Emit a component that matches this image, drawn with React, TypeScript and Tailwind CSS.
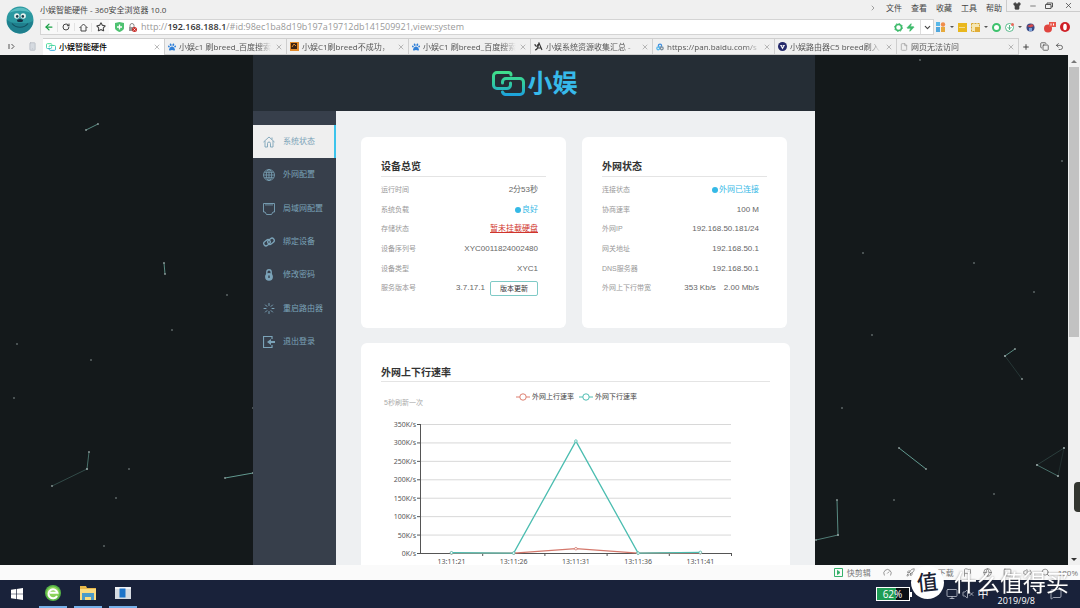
import type { ReactNode } from "react";
import {
  ArrowLeft,
  ChevronDown,
  ChevronRight,
  Copy,
  Download,
  File,
  Flag,
  Gauge,
  Globe,
  Loader,
  MessageSquare,
  Minus,
  Monitor,
  Plus,
  Rocket,
  RotateCw,
  Search,
  Shirt,
  Smartphone,
  Square,
  Star,
  Undo2,
  Volume2,
  VolumeX,
  X,
  Zap,
} from "lucide-react";
import { FaPaw } from "react-icons/fa";

function Avatar() {
  return (
    <svg viewBox="0 0 28 28" className="h-7 w-7">
      <circle cx="14" cy="14" r="13.5" fill="#2b98a0" />
      <path d="M1 14a13 13 0 0 0 26 1c-5 3-8 2-13 2S5 17 1 14z" fill="#1f7f8d" />
      <path d="M3 7c5-6 16-8 22 0-6-3-16-3-22 0z" fill="#5bbcc0" />
      <circle cx="10.8" cy="10" r="2.700" fill="#e6f2f0" />
      <circle cx="17.2" cy="10" r="2.700" fill="#e6f2f0" />
      <circle cx="11.2" cy="10.4" r="1.3" fill="#173d4a" />
      <circle cx="16.8" cy="10.4" r="1.3" fill="#173d4a" />
      <ellipse cx="14" cy="14.5" rx="3" ry="1.6" fill="#152f42" />
      <path d="M6 17.500c4 5 12 5 16 0" stroke="#12505f" strokeWidth="1.2" fill="none" />
    </svg>
  );
}

function LinkMark({ className }: { className: string }) {
  return (
    <svg viewBox="0 0 33 25" className={className} fill="none" strokeWidth="3" strokeLinecap="round">
      <defs>
        <linearGradient id="mark" x1="0" y1="0" x2="0" y2="25" gradientUnits="userSpaceOnUse">
          <stop offset="0" stopColor="#41e089" />
          <stop offset="0.55" stopColor="#2fc7a4" />
          <stop offset="1" stopColor="#1b9fe2" />
        </linearGradient>
      </defs>
      <path
        d="M19 4V4a2.500 2.500 0 0 0-2.500-2.500H5A3.500 3.500 0 0 0 1.500 5v9A3.500 3.500 0 0 0 5 17.500h10a3.500 3.500 0 0 0 3.500-3.500v-2"
        stroke="url(#mark)"
      />
      <path
        d="M10.500 12V11a3.500 3.500 0 0 1 3.500-3.500h14a3.500 3.500 0 0 1 3.500 3.500v9a3.500 3.500 0 0 1-3.500 3.500H14a3.500 3.500 0 0 1-3.500-2.500"
        stroke="url(#mark)"
      />
    </svg>
  );
}

const tabs: { title: string; icon: ReactNode; active?: boolean }[] = [
  { title: "小娱智能硬件", icon: <LinkMark className="h-2 w-[10px]" />, active: true },
  { title: "小娱c1 刷breed_百度搜索", icon: <FaPaw className="size-2 text-[#2f7fd8]" /> },
  {
    title: "小娱C1刷breed不成功，",
    icon: (
      <svg viewBox="0 0 9 9" className="size-[9px]">
        <path d="M0 0h9v9H0z" fill="#e08a2c" />
        <path d="M1 1h6v6H1z" fill="#3a2212" />
        <path d="M2 5l2-3 2 2" stroke="#e08a2c" fill="none" />
      </svg>
    ),
  },
  { title: "小娱C1 刷breed_百度搜索", icon: <FaPaw className="size-2 text-[#2f7fd8]" /> },
  {
    title: "小娱系统资源收集汇总 - ",
    icon: (
      <svg viewBox="0 0 9 9" className="size-[9px]" fill="none" stroke="#333" strokeWidth="1.1">
        <path d="M1 2c0 3 3 3 3 0M1 8c3 0 3-4 4-7l3 7M4 6h3" />
      </svg>
    ),
  },
  {
    title: "https://pan.baidu.com/s",
    icon: (
      <svg viewBox="0 0 9 9" className="size-2" fill="none" strokeWidth="1.4">
        <circle cx="4.500" cy="3" r="1.800" stroke="#3d8fe0" />
        <circle cx="2.500" cy="6" r="1.600" stroke="#54b5ea" />
        <circle cx="6.500" cy="6" r="1.600" stroke="#7b8c9a" />
      </svg>
    ),
  },
  {
    title: "小娱路由器C5 breed刷入",
    icon: (
      <svg viewBox="0 0 9 9" className="size-[9px]">
        <circle cx="4.500" cy="4.500" r="4.500" fill="#252a6b" />
        <path d="M2 3h5L4.500 7.500z" fill="#fff" />
        <circle cx="4.500" cy="4" r=".8" fill="#252a6b" />
      </svg>
    ),
  },
  { title: "网页无法访问", icon: <File className="size-2 text-[#999]" /> },
];

function Caret() {
  return <span className="border-x-2 border-t-2 border-x-transparent border-t-[#555]" />;
}

function BrowserBar() {
  return (
    <header className="shrink-0 bg-[#f0f0f0] text-[#444]">
      <div className="flex">
        <div className="flex w-10 shrink-0 items-center pl-[6px] pt-1">
          <Avatar />
        </div>
        <div className="min-w-0 flex-1">
          <div className="flex h-[19px] items-center text-[8px]">
            <span className="flex-1">小娱智能硬件 - 360安全浏览器 10.0</span>
            <nav className="flex h-full items-center gap-[9px] pb-1 pr-1">
              <ChevronRight className="size-2 text-[#777]" />
              {["文件", "查看", "收藏", "工具", "帮助"].map((m) => (
                <button key={m}>{m}</button>
              ))}
            </nav>
            <div className="flex h-3 items-center gap-2 self-start border-b border-l border-[#ccc] pl-[6px] pr-[7px]">
              <button aria-label="皮肤">
                <Shirt className="size-2" fill="#444" />
              </button>
              <button aria-label="最小化">
                <Minus className="size-2" />
              </button>
              <button aria-label="还原">
                <svg viewBox="0 0 8 8" className="size-2" fill="none" stroke="#555">
                  <path d="M.5 2.500h5.500v4H.500zM2 2.500v-1.500h5.500v4H6" />
                </svg>
              </button>
              <button aria-label="关闭" className="pl-[3px]">
                <X className="size-[9px]" />
              </button>
            </div>
          </div>
          <div className="flex h-4 items-center">
            <div className="flex h-4 min-w-0 flex-1 items-center border border-[#d4d4d4] bg-white">
              <div className="flex h-full items-center divide-x divide-[#e2e2e2] bg-[#f8f8f8]">
                <button aria-label="后退" className="flex w-[17px] justify-center">
                  <ArrowLeft className="size-[10px] text-[#18a045]" strokeWidth={3} />
                </button>
                <button aria-label="刷新" className="flex w-[17px] justify-center">
                  <RotateCw className="size-2" strokeWidth={3} />
                </button>
                <button aria-label="主页" className="flex w-[17px] justify-center">
                  <svg viewBox="0 0 9 9" className="size-[9px]" fill="none" stroke="#444">
                    <path d="M.5 5L4.500 1l4 4M2 4v4h5V4" />
                  </svg>
                </button>
                <button aria-label="收藏" className="flex w-[17px] justify-center">
                  <Star className="size-[10px]" strokeWidth={2.500} />
                </button>
              </div>
              <svg viewBox="0 0 9 10" className="ml-[6px] h-[10px] w-[9px]">
                <path d="M0 1L4.500 0 9 1v5c0 2-3 3.500-4.500 4C3 9.500 0 8 0 6z" fill="#4ec271" />
                <path d="M4.500 2.500v5M2 5h5" stroke="#fff" strokeWidth="1.300" />
              </svg>
              <svg viewBox="0 0 9 9" className="ml-1 size-[9px]">
                <path d="M2 4V2.500a2 2 0 0 1 4 0V4" stroke="#888" fill="none" />
                <path d="M1 4h6v4H1z" fill="#999" />
                <circle cx="6.500" cy="6.500" r="2.500" fill="#c9302c" />
                <path d="M5.500 5.500l2 2m0-2l-2 2" stroke="#fff" strokeWidth=".7" />
              </svg>
              <label htmlFor="address" className="ml-1 shrink-0 text-[9px] text-[#999]">
                http://<b className="font-semibold text-[#333]">192.168.188.1</b>
              </label>
              <input
                id="address"
                className="min-w-0 flex-1 text-[9px] text-[#999] outline-none"
                defaultValue="/#id:98ec1ba8d19b197a19712db141509921,view:system"
              />
              <svg viewBox="0 0 9 9" className="size-[9px]" fill="none" stroke="#3cba6a">
                <circle cx="4.500" cy="4.500" r="3" strokeWidth="1.500" />
                <circle cx="4.500" cy="4.500" r="4" strokeDasharray="1.500 1.600" />
              </svg>
              <Zap className="ml-[3px] mr-[5px] size-[9px] text-[#3cba6a]" fill="#3cba6a" />
              <button aria-label="展开" className="flex h-full w-[13px] items-center justify-center border-l border-[#ddd]">
                <ChevronDown className="size-[9px]" strokeWidth={3} />
              </button>
            </div>
            <div className="flex w-[146px] shrink-0 items-center pl-[2px] pr-[10px]">
              <svg viewBox="0 0 10 10" className="size-[10px]">
                <path d="M0 0h4v4H0z" fill="#58b8e8" />
                <circle cx="7" cy="2.500" r="2.200" fill="#f08c4a" />
                <path d="M0 5h4v5H0z" fill="#50a7dd" />
                <path d="M5 5h4v5H5z" fill="#e6a93c" />
              </svg>
              <span className="ml-1 flex">
                <Caret />
              </span>
              <svg viewBox="0 0 9 9" className="ml-1 size-[9px]">
                <path d="M0 0h9v9H0z" fill="#e9b71d" />
                <path d="M1.500 4.500h6" stroke="#fff" strokeDasharray="1 1" />
              </svg>
              <svg viewBox="0 0 9 9" className="ml-1 size-[9px]">
                <path d="M.5.500h8v8h-8z" fill="#f5e7b4" stroke="#d9a62c" strokeDasharray="2 1" />
                <path d="M4 4h5v5H4z" fill="#e2ad35" />
              </svg>
              <span className="ml-1 flex">
                <Caret />
              </span>
              <svg viewBox="0 0 9 9" className="ml-1 size-[9px]">
                <circle cx="4.500" cy="4.500" r="3.500" stroke="#3ec26d" strokeWidth="2" fill="#fff" />
              </svg>
              <svg viewBox="0 0 9 9" className="ml-1 size-[9px]">
                <circle cx="4.500" cy="4.500" r="4" stroke="#57b98a" fill="#fff" />
                <path d="M4.500 2v5M2.500 4l2 2 2-2" stroke="#57b98a" fill="none" />
                <circle cx="7.500" cy="1.500" r="1.500" fill="#e86a5c" />
              </svg>
              <span className="ml-1 flex">
                <Caret />
              </span>
              <svg viewBox="0 0 9 9" className="ml-1 size-[9px]">
                <circle cx="4.500" cy="4.500" r="4" fill="#3a4a86" />
                <path d="M1 3l3.500 1.500L8 3 6 1z" fill="#d4494a" />
                <path d="M3 5h3v3H3z" fill="#7aa1d8" />
              </svg>
              <svg viewBox="0 0 12 11" className="ml-auto h-[11px] w-3">
                <circle cx="4" cy="6.500" r="4" fill="#e0453f" />
                <path d="M5 0h7v5H5z" fill="#e9574b" />
                <path d="M7 1.500v2M9.500 1.500v2" stroke="#fff" />
              </svg>
              <svg viewBox="0 0 10 10" className="ml-1 size-[10px]">
                <circle cx="5" cy="5" r="5" fill="#cf1f26" />
                <ellipse cx="5" cy="5" rx="1.800" ry="3.200" fill="#fff" />
              </svg>
            </div>
          </div>
        </div>
      </div>
      <div className="flex h-5 items-end pt-[3px] text-[8px]">
        <div className="flex h-[17px] w-[43px] shrink-0 items-center justify-between pl-2 pr-[6px]">
          <svg viewBox="0 0 7 7" className="size-[7px]" fill="none" stroke="#555">
            <path d="M1 1v5M3.500 1L6 3.500 3.500 6" />
          </svg>
          <Smartphone className="size-[9px] text-[#b4bac2]" fill="#d5dae0" />
        </div>
        <div className="flex h-[17px] min-w-0 flex-1">
          {tabs.map((tab, i) => (
            <div
              key={i}
              className={`flex min-w-0 flex-1 items-center gap-[3px] border-r border-t border-[#cfcfcf] px-[3px] ${
                tab.active ? "bg-white text-black" : "border-b bg-[#f0f0f0] text-[#555]"
              }`}
            >
              <span className="shrink-0">{tab.icon}</span>
              <button
                className={`min-w-0 flex-1 overflow-hidden whitespace-nowrap text-left ${
                  tab.active ? "font-medium" : "mask-r-from-85%"
                }`}
              >
                {tab.title}
              </button>
              <button aria-label="关闭标签" className="shrink-0 text-[#999]">
                <X className="size-2" strokeWidth={2} />
              </button>
            </div>
          ))}
        </div>
        <div className="flex h-[17px] w-[61px] shrink-0 items-center pl-[3px]">
          <button aria-label="新标签">
            <Plus className="size-2" strokeWidth={3} />
          </button>
          <Copy className="ml-[10px] size-[9px]" />
          <Undo2 className="ml-[6px] size-[9px]" />
        </div>
      </div>
    </header>
  );
}

// [x1, y1, x2, y2, opacity]
const lines = [
  [86, 75, 98, 69, 0.8],
  [164, 208, 165, 219, 0.8],
  [52, 431, 87, 414, 0.35],
  [87, 414, 89, 397, 0.6],
  [225, 423, 253, 418, 0.9],
  [1005, 301, 1015, 294, 0.8],
  [1005, 301, 1022, 324, 0.2],
  [899, 393, 926, 414, 0.9],
  [1037, 410, 1064, 393, 0.25],
  [1037, 410, 1058, 421, 0.6],
  [1058, 421, 1064, 393, 0.15],
  [837, 445, 838, 480, 0.8],
  [838, 480, 816, 485, 0.7],
];

const dots = [
  [172, 275], [227, 240], [91, 305], [17, 289], [14, 343], [129, 414], [116, 443], [104, 491],
  [872, 280], [842, 353], [894, 445], [994, 439], [920, 5], [863, 198], [1062, 106], [974, 208],
  [1034, 237], [253, 353],
];

function Particles() {
  return (
    <svg className="absolute inset-0 h-full w-full" stroke="#6aa79c" fill="#8d9a9a">
      {lines.map(([x1, y1, x2, y2, opacity], i) => (
        <g key={i}>
          <line x1={x1} y1={y1} x2={x2} y2={y2} opacity={opacity} />
          <circle cx={x1} cy={y1} r="0.9" stroke="none" />
          <circle cx={x2} cy={y2} r="0.9" stroke="none" />
        </g>
      ))}
      {dots.map(([x, y], i) => (
        <circle key={i} cx={x} cy={y} r="0.8" stroke="none" />
      ))}
    </svg>
  );
}

const menu: { label: string; icon: ReactNode; active?: boolean }[] = [
  {
    label: "系统状态",
    active: true,
    icon: (
      <svg viewBox="0 0 12 12" className="size-3" fill="none" stroke="currentColor" strokeWidth=".9">
        <path d="M.5 6L6 1l5.500 5M2 5v6h2.500V7.500a1.500 1.500 0 0 1 3 0V11H10V5M9 3.500V1.500" />
      </svg>
    ),
  },
  {
    label: "外网配置",
    icon: (
      <svg viewBox="0 0 12 12" className="size-3" fill="none" stroke="currentColor" strokeWidth=".8">
        <circle cx="6" cy="6" r="5.500" />
        <ellipse cx="6" cy="6" rx="2.700" ry="5.500" />
        <path d="M6 .5v11M.5 6h11M1.300 3.300h9.400M1.300 8.700h9.400" />
      </svg>
    ),
  },
  {
    label: "局域网配置",
    icon: (
      <svg viewBox="0 0 12 12" className="size-3" fill="none" stroke="currentColor" strokeWidth=".9">
        <path d="M.5.500h11v8.500h-1.500L8.500 11.500h-5L2 9H.5zM3 .5v2.200M5 .5v2.200M7 .5v2.200M9 .5v2.200" />
      </svg>
    ),
  },
  {
    label: "绑定设备",
    icon: (
      <svg viewBox="0 0 12 12" className="size-3" fill="none" stroke="currentColor" strokeWidth="1.300">
        <rect x="0.500" y="4.500" width="7" height="4.500" rx="2.250" transform="rotate(-40 4 6.750)" />
        <rect x="4.500" y="3" width="7" height="4.500" rx="2.250" transform="rotate(-40 8 5.250)" />
      </svg>
    ),
  },
  {
    label: "修改密码",
    icon: (
      <svg viewBox="0 0 12 12" className="size-3">
        <path d="M3.800 6V3a2.200 2.200 0 0 1 4.400 0v3" stroke="currentColor" strokeWidth="1.400" fill="none" />
        <circle cx="6" cy="7.800" r="3.900" fill="currentColor" />
        <path d="M6 6.500v2.500" stroke="#373f4b" strokeWidth="1.400" />
      </svg>
    ),
  },
  { label: "重启路由器", icon: <Loader className="size-[13px]" strokeWidth={2} /> },
  {
    label: "退出登录",
    icon: (
      <svg viewBox="0 0 12 12" className="size-3" fill="none" stroke="currentColor">
        <path d="M9 3V.5H.5v11H9V9" strokeWidth="1.200" />
        <path d="M12 5H8V3L4 6l4 3V7h4z" fill="currentColor" stroke="none" />
      </svg>
    ),
  },
];

function Sidebar() {
  return (
    <nav className="w-[83px] shrink-0 bg-[#373f4b] pt-[14px]">
      <ul className="flex h-[234px] flex-col text-[8px] text-[#7ba3b8]">
        {menu.map((item) => (
          <li key={item.label} className="flex-1">
            <a
              href="#"
              className={`flex h-full items-center gap-2 pl-[10px] ${
                item.active ? "border-r-2 border-[#3cc4ec] bg-[#efefef]" : ""
              }`}
            >
              <span className="flex w-3 justify-center">{item.icon}</span>
              {item.label}
            </a>
          </li>
        ))}
      </ul>
    </nav>
  );
}

type Row = [string, ReactNode];

function InfoCard({ title, rows }: { title: string; rows: Row[] }) {
  return (
    <section className="h-[191px] flex-1 rounded-md bg-white px-5 pt-5">
      <h2 className="h-5 border-b border-[#e4e4e4] text-[10px] font-bold leading-[19px] text-[#333]">{title}</h2>
      <dl className="mt-[3px] flex h-[118px] flex-col pr-2">
        {rows.map(([label, value]) => (
          <div key={label} className="flex flex-1 items-center justify-between">
            <dt className="text-[7px] text-[#999]">{label}</dt>
            <dd className="text-[8px] text-[#666]">{value}</dd>
          </div>
        ))}
      </dl>
    </section>
  );
}

function Good({ children }: { children: ReactNode }) {
  return (
    <span className="flex items-center gap-px text-[#35b9e6]">
      <span className="size-[6px] rounded-full bg-[#35b9e6]" />
      {children}
    </span>
  );
}

const device: Row[] = [
  ["运行时间", "2分53秒"],
  ["系统负载", <Good>良好</Good>],
  [
    "存储状态",
    <a href="#" className="text-[#d0342c] underline">
      暂未挂载硬盘
    </a>,
  ],
  ["设备序列号", "XYC0011824002480"],
  ["设备类型", "XYC1"],
  [
    "服务版本号",
    <span className="flex items-center gap-[5px]">
      3.7.17.1
      <button className="h-[15px] w-12 rounded-[2px] border border-[#7fcac6] text-[7px] leading-none text-[#333]">
        版本更新
      </button>
    </span>,
  ],
];

const wan: Row[] = [
  ["连接状态", <Good>外网已连接</Good>],
  ["协商速率", "100 M"],
  ["外网IP", "192.168.50.181/24"],
  ["网关地址", "192.168.50.1"],
  ["DNS服务器", "192.168.50.1"],
  [
    "外网上下行带宽",
    <span className="flex gap-2">
      <span>353 Kb/s</span>
      <span>2.00 Mb/s</span>
    </span>,
  ],
];

const times = ["13:11:21", "13:11:26", "13:11:31", "13:11:36", "13:11:41"];
const up = [1, 1, 13, 1, 2];
const down = [2, 1, 305, 1, 3];

const px = (i: number) => 70.5 + i * 62.2;
const py = (v: number) => 149.5 - (v / 350) * 129;

function Series({ data, color }: { data: number[]; color: string }) {
  return (
    <g stroke={color} fill="none">
      <polyline points={data.map((v, i) => `${px(i)},${py(v)}`).join(" ")} strokeWidth="1.3" />
      {data.map((v, i) => (
        <circle key={i} cx={px(i)} cy={py(v)} r="1.3" fill="#fff" strokeWidth="0.8" />
      ))}
    </g>
  );
}

function RateChart() {
  return (
    <svg viewBox="0 0 389 180" className="w-full font-['Noto_Sans','Noto_Sans_CJK_SC',sans-serif] text-[7px]">
      {[0, 50, 100, 150, 200, 250, 300, 350].map((v) => (
        <g key={v}>
          {v > 0 && <line x1="39" x2="350" y1={py(v)} y2={py(v)} stroke="#d8d8d8" />}
          <line x1="36" x2="39" y1={py(v)} y2={py(v)} stroke="#555" />
          <text x="35" y={py(v) + 2.5} textAnchor="end" fill="#555">
            {v}K/s
          </text>
        </g>
      ))}
      <path d="M39.500 20V150M39 149.500H350.500" stroke="#555" fill="none" />
      {[1, 2, 3, 4, 5].map((i) => (
        <line key={i} x1={39.5 + i * 62.2} x2={39.5 + i * 62.2} y1="149" y2="152" stroke="#555" />
      ))}
      {times.map((t, i) => (
        <text key={t} x={px(i)} y="160" textAnchor="middle" fill="#555">
          {t}
        </text>
      ))}
      <Series data={up} color="#d4786c" />
      <Series data={down} color="#4bbdb0" />
    </svg>
  );
}

function LegendItem({ label, color }: { label: string; color: string }) {
  return (
    <span className="flex items-center gap-[2px]">
      <svg viewBox="0 0 14 8" className="h-2 w-[14px]" stroke={color} fill="#fff">
        <path d="M0 4h14" />
        <circle cx="7" cy="4" r="3.200" />
      </svg>
      {label}
    </span>
  );
}

function ChartCard() {
  return (
    <section className="mt-[15px] w-[429px] rounded-t-md bg-white px-5 pt-5">
      <h2 className="h-[19px] border-b border-[#e4e4e4] text-[10px] font-bold leading-[19px] text-[#333]">
        外网上下行速率
      </h2>
      <div className="grid h-[22px] grid-cols-[135px_1fr] text-[7px] leading-[10px]">
        <p className="pl-[3px] pt-4 text-[#aaa]">5秒刷新一次</p>
        <div className="flex gap-[5px] self-start pt-[10px] text-[#444]">
          <LegendItem label="外网上行速率" color="#dd7f70" />
          <LegendItem label="外网下行速率" color="#4fbdb3" />
        </div>
      </div>
      <RateChart />
    </section>
  );
}

function Scrollbar() {
  return (
    <div className="relative flex w-3 shrink-0 flex-col items-center bg-[#f0f0f0]">
      <button aria-label="向上滚动" className="flex h-3 items-center">
        <span className="border-x-[3px] border-b-[3px] border-x-transparent border-b-[#777]" />
      </button>
      <div className="h-[270px] w-[10px] bg-[#c2c2c2]" />
      <button aria-label="向下滚动" className="mt-auto flex h-3 items-center">
        <span className="border-x-[3px] border-t-[3px] border-x-transparent border-t-[#333]" />
      </button>
      <div className="absolute right-0 top-[427px] h-[30px] w-[6px] rounded-l-sm bg-[#33352f]" />
    </div>
  );
}

function RouterPage() {
  return (
    <div className="flex min-h-0 flex-1">
      <div className="relative min-w-0 flex-1 overflow-hidden bg-[#14191b]">
        <Particles />
        <div className="relative mx-auto flex min-h-full w-[562px] flex-col font-['Liberation_Sans','Noto_Sans_CJK_SC',sans-serif]">
          <div className="flex h-14 items-center justify-center gap-[2px] bg-[#252d35] pl-0.5">
            <LinkMark className="h-[25px] w-[33px]" />
            <h1 className="text-[25px] font-bold leading-none text-[#37b9ea]">小娱</h1>
          </div>
          <div className="flex flex-1">
            <Sidebar />
            <main className="min-w-0 flex-1 bg-[#eef0f2] pl-[25px] pt-[26px]">
              <div className="flex w-[426px] gap-4">
                <InfoCard title="设备总览" rows={device} />
                <InfoCard title="外网状态" rows={wan} />
              </div>
              <ChartCard />
            </main>
          </div>
        </div>
      </div>
      <Scrollbar />
    </div>
  );
}

function StatusBar() {
  return (
    <div className="flex h-[15px] shrink-0 items-center justify-end bg-[#fafafa] pr-[2px] text-[8px] text-[#777]">
      <button className="flex items-center gap-1">
        <svg viewBox="0 0 9 9" className="size-[9px]" fill="none" stroke="#35b16a">
          <path d="M.5.500h8v8h-8z" />
          <path d="M3.500 2.500l2.500 2-2.500 2z" fill="#35b16a" />
        </svg>
        快剪辑
      </button>
      <Gauge className="ml-3 size-[9px]" />
      <Rocket className="ml-[14px] size-[9px]" />
      <button className="ml-3 flex items-center gap-[2px]">
        <Download className="size-[9px]" />
        下载
      </button>
      <Flag className="ml-[9px] size-[9px]" />
      <Globe className="ml-[11px] size-[9px]" />
      <Square className="ml-[11px] size-[9px]" />
      <Volume2 className="ml-[11px] size-[9px]" />
      <Search className="ml-[9px] mr-[8px] size-[9px]" />
      <span>100%</span>
    </div>
  );
}

function Taskbar() {
  return (
    <footer className="flex h-7 shrink-0 items-center bg-[#19223a] text-white">
      <button aria-label="开始" className="flex w-[39px] justify-center pr-[6px]">
        <svg viewBox="0 0 12 12" className="size-3" fill="#fff">
          <path d="M0 1.700L5 1v4.700H0zM5.700.900L12 0v5.700H5.700zM0 6.300h5V11l-5-.7zM5.700 6.300H12V12l-6.300-.9z" />
        </svg>
      </button>
      <div className="flex h-full gap-[7px]">
        <button aria-label="360安全浏览器" className="flex w-7 items-center justify-center border-b-2 border-[#76b1ea]">
          <svg viewBox="0 0 16 16" className="size-4">
            <circle cx="8" cy="8" r="8" fill="#57b647" />
            <circle cx="8" cy="8" r="6.500" fill="#8bd35a" />
            <path d="M12 11a4.500 4.500 0 1 1 .4-3.300H5" stroke="#fff" strokeWidth="2" fill="none" />
          </svg>
        </button>
        <button aria-label="文件资源管理器" className="flex w-7 items-center justify-center border-b-2 border-[#76b1ea]">
          <svg viewBox="0 0 16 14" className="h-[14px] w-4">
            <path d="M0 0h6l1 2h9v12H0z" fill="#e8b84a" />
            <path d="M0 3h16v11H0z" fill="#fbdc80" />
            <path d="M2 14V7h12v7h-3v-3H5v3z" fill="#4c9cc9" />
          </svg>
        </button>
        <button aria-label="应用" className="flex w-7 items-center justify-center border-b-2 border-[#76b1ea]">
          <svg viewBox="0 0 16 12" className="h-3 w-4">
            <path d="M0 0h16v12H0z" fill="#d5dbe1" />
            <path d="M0 0h16v2H0z" fill="#f2f4f6" />
            <path d="M4.500 1.500h6v9h-6z" fill="#1d74c9" />
          </svg>
        </button>
      </div>
      <div className="ml-auto flex items-center text-[9px]">
        <span className="flex h-[14px] w-[34px] items-center justify-center border border-white bg-[linear-gradient(90deg,#1f9c55_60%,#0b0f14_60%)] text-[10px]">
          62%
        </span>
        <span className="h-[5px] w-[2px] bg-white" />
        <Monitor className="ml-[34px] size-3 text-[#c9ced8]" strokeWidth={1.5} />
        <VolumeX className="ml-[4px] size-3 text-[#c9ced8]" strokeWidth={1.5} />
        <span className="ml-[4px] text-[11px]">中</span>
        <time className="ml-[9px] self-end pt-[14px]">2019/9/8</time>
        <MessageSquare className="ml-[15px] mr-[18px] size-3 text-[#c9ced8]" strokeWidth={1.5} />
      </div>
    </footer>
  );
}

function Watermark() {
  return (
    <div className="pointer-events-none absolute bottom-[9px] right-[11px] flex items-center gap-[10px] text-white">
      <span className="flex size-[33px] items-center justify-center rounded-full bg-white text-[21px] font-medium leading-none text-[#1b2233]">
        <span className="-rotate-6">值</span>
      </span>
      <span className="text-[23px] leading-none drop-shadow-[0_0_1px_rgba(60,60,60,0.5)]">什么值得买</span>
    </div>
  );
}

export default function App() {
  return (
    <div
      lang="zh-CN"
      className="relative flex h-screen flex-col overflow-hidden font-['Open_Sans','Noto_Sans_CJK_SC',sans-serif] leading-[12px]"
    >
      <BrowserBar />
      <RouterPage />
      <StatusBar />
      <Taskbar />
      <Watermark />
    </div>
  );
}
